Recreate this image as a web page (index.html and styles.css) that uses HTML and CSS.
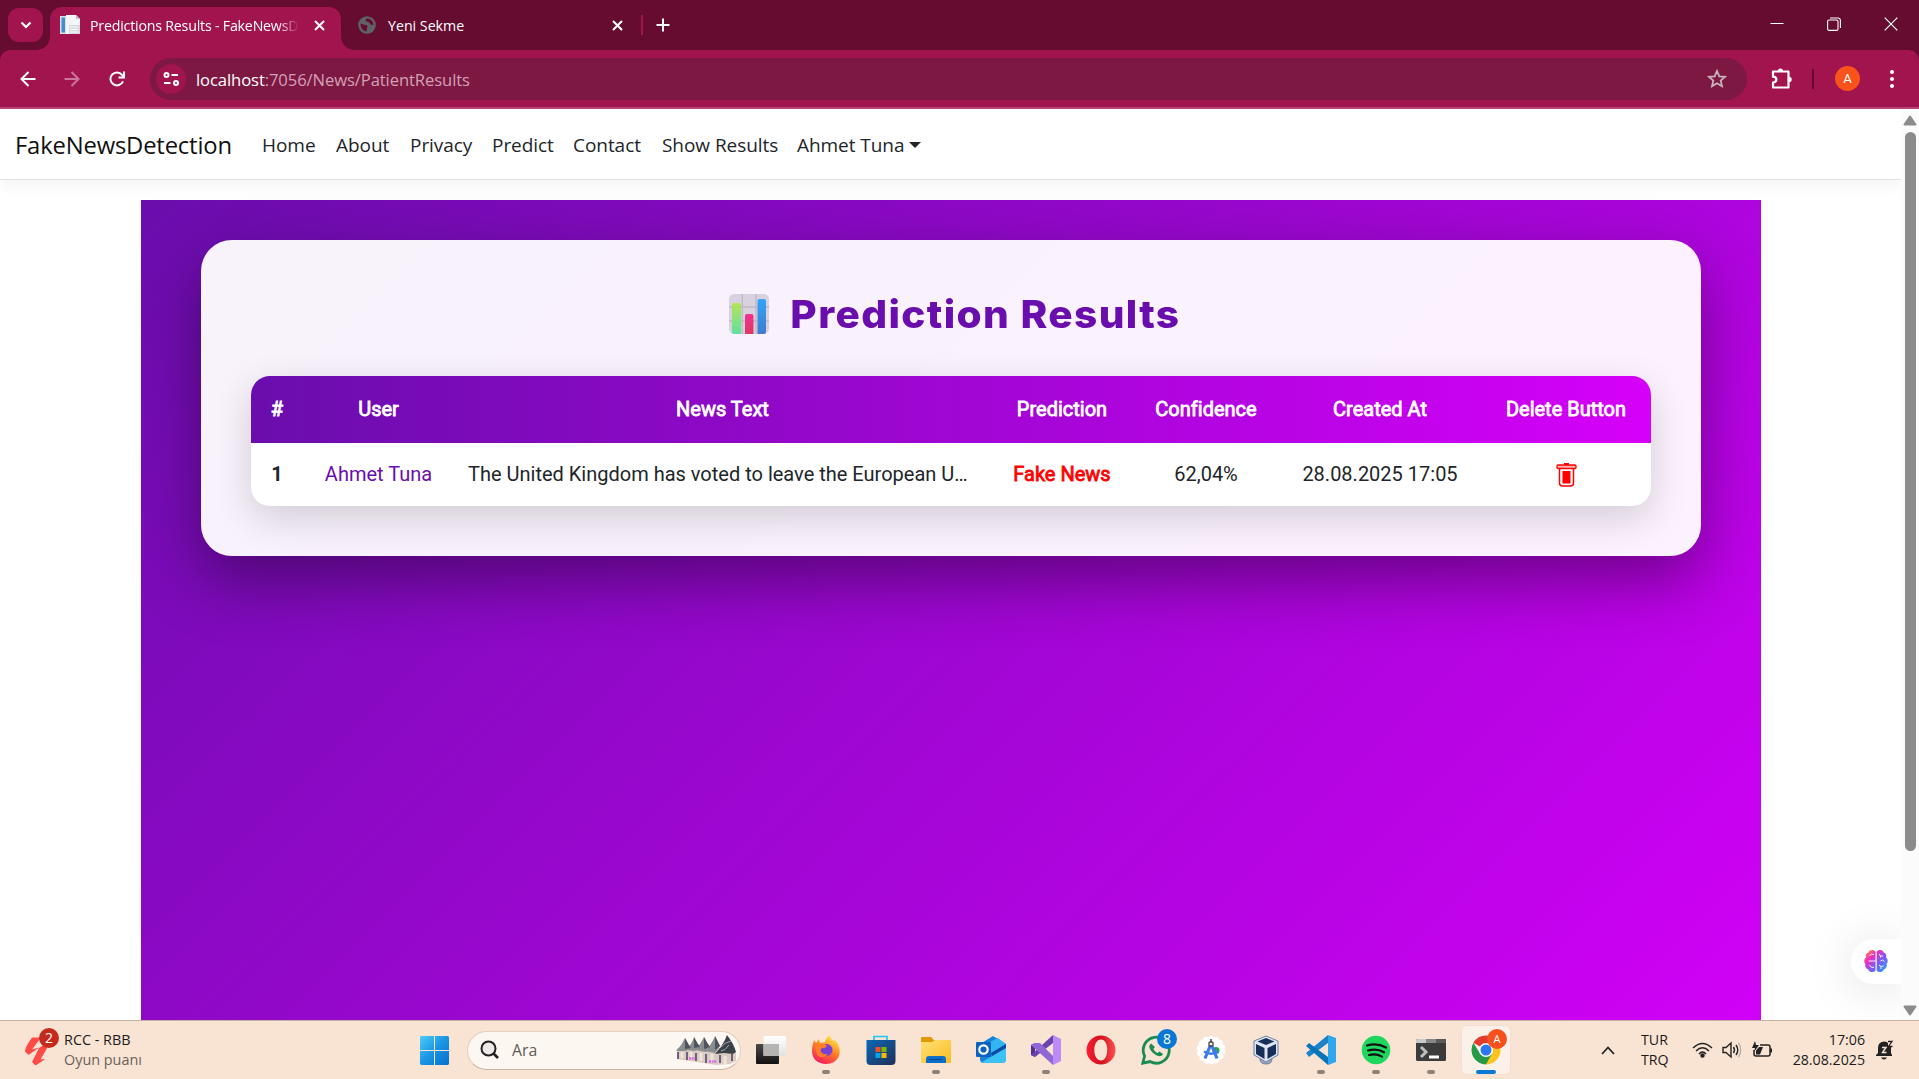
FILE: index.html
```html
<!DOCTYPE html>
<html lang="tr">
<head>
<meta charset="utf-8">
<title>Predictions Results - FakeNewsDetection</title>
<link rel="stylesheet" href="styles.css">
</head>
<body>
<div class="screen">
  <header class="tabstrip">
    <button class="tab-search" aria-label="Tabs"><svg width="12" height="8" viewBox="0 0 12 8"><path d="M1.5 1.5 6 6l4.500-4.500" fill="none" stroke="#fff" stroke-width="2.200"/></svg></button>
    <div class="tab tab-active">
      <svg class="favicon" width="21" height="20" viewBox="0 0 21 20"><rect x="0" y="1" width="13" height="18" fill="#d9dde2"/><rect x="1.500" y="2.500" width="3.500" height="15" fill="#3f8fd0"/><path d="M6 0h10l4 4v15H6z" fill="#f3f5f7"/><path d="M16 0l4 4h-4z" fill="#b9c2cb"/><rect x="9" y="10" width="11" height="9" fill="#d3dae0"/><path d="M10 12h8M10 14.500h8M10 17h8" stroke="#fff"/></svg>
      <span class="tab-title fade">Predictions Results - FakeNewsDetection</span>
      <svg class="tab-x" width="11" height="11" viewBox="0 0 11 11"><path d="M1 1l9 9M10 1l-9 9" stroke="#fff" stroke-width="2"/></svg>
    </div>
    <div class="tab tab-second">
      <svg class="globe" width="18" height="18" viewBox="0 0 18 18"><circle cx="9" cy="9" r="8.800" fill="#5f6368"/><path d="M2.500 7.500c2 .5 3.500 1.500 5.500 1.500 1.500.5 2 2 1 3l-.5 3.500C5 15 2.500 12 2.500 7.500zM9.500 2.500c-2 .5-2.500 2-1 3 1.500.5 3.500.5 3.500 2.500 1 1.500 2.500.5 3.500 1 0-3.500-2.500-6-6-6.500z" fill="#650c30"/></svg>
      <span class="tab-title">Yeni Sekme</span>
      <svg class="tab-x" width="11" height="11" viewBox="0 0 11 11"><path d="M1 1l9 9M10 1l-9 9" stroke="#fff" stroke-width="2"/></svg>
    </div>
    <span class="tab-sep"></span>
    <svg class="new-tab" width="14" height="14" viewBox="0 0 14 14"><path d="M7 .5v13M.5 7h13" stroke="#fff" stroke-width="2"/></svg>
    <div class="win-controls">
      <svg width="14" height="14" viewBox="0 0 14 14"><path d="M.5 6.500h13" stroke="#fff"/></svg>
      <svg width="14" height="14" viewBox="0 0 14 14" fill="none" stroke="#fff" stroke-width="1.100"><rect x=".6" y="3" width="10.400" height="10.400" rx="1.500"/><path d="M3 1h8a2.400 2.400 0 0 1 2.400 2.400V11"/></svg>
      <svg width="14" height="14" viewBox="0 0 14 14"><path d="M.7.7l12.600 12.600M13.300.7.7 13.300" stroke="#fff" stroke-width="1.200"/></svg>
    </div>
  </header>

  <div class="toolbar-wrap"><div class="toolbar">
    <svg class="t-back" width="16" height="16" viewBox="0 0 16 16" fill="none" stroke="#fff" stroke-width="2"><path d="M15.500 8H2M8.500 1 1.500 8l7 7"/></svg>
    <svg class="t-fwd" width="16" height="16" viewBox="0 0 16 16" fill="none" stroke="#c9779a" stroke-width="2"><path d="M.5 8H14M7.500 1l7 7-7 7"/></svg>
    <svg class="t-reload" width="16" height="16" viewBox="0 0 16 16" fill="none" stroke="#fff" stroke-width="2"><path d="M14 10.300A6.500 6.500 0 1 1 13 3.800L14.600 6"/><path d="M15 .5V6.500H9.500"/></svg>
    <div class="omnibox">
      <span class="site-info"><svg width="17" height="14" viewBox="0 0 17 14" fill="none" stroke="#fff" stroke-width="2"><circle cx="3.500" cy="3" r="2"/><path d="M8.500 3H15M1 11h6.500"/><circle cx="13" cy="11" r="2"/></svg></span>
      <span class="url"><b>localhost</b>:7056/News/PatientResults</span>
      <svg class="star" width="20" height="19" viewBox="0 0 20 19"><path d="M10 2l2.300 5.300 5.700.5-4.300 3.800 1.300 5.600-5-3-5 3 1.300-5.600L2 7.800l5.700-.5z" fill="none" stroke="#c8b4bd" stroke-width="1.800"/></svg>
    </div>
    <svg class="puzzle" width="21" height="21" viewBox="0 0 21 21"><path d="M2 3.500h15.500v16H2v-5c4.500-.3 4.500-5.500 0-5.800z" fill="none" stroke="#fff" stroke-width="2.200" stroke-linejoin="round"/><path d="M6.800 3a2.600 2.600 0 0 1 5.200 0zM18 8.800a2.700 2.700 0 0 1 0 5.400z" fill="#fff"/></svg>
    <span class="tool-sep"></span>
    <span class="avatar">A</span>
    <svg class="dots" width="4" height="20" viewBox="0 0 4 20" fill="#fff"><circle cx="2" cy="3" r="2"/><circle cx="2" cy="10" r="2"/><circle cx="2" cy="17" r="2"/></svg>
  </div></div>

  <div class="viewport">
    <div class="page">
      <nav class="navbar">
        <a class="brand">FakeNewsDetection</a>
        <a class="n1">Home</a><a class="n2">About</a><a class="n3">Privacy</a><a class="n4">Predict</a><a class="n5">Contact</a><a class="n6">Show Results</a><a class="n7">Ahmet Tuna<i class="caret"></i></a>
      </nav>
      <main class="results">
        <section class="card">
          <h1><svg width="40" height="40" viewBox="0 0 40 40"><defs><linearGradient id="g1" x1="0" y1="0" x2="0" y2="1"><stop offset="0" stop-color="#b4e556"/><stop offset="1" stop-color="#5fe0a0"/></linearGradient><linearGradient id="g2" x1="0" y1="0" x2="0" y2="1"><stop offset="0" stop-color="#f42f93"/><stop offset="1" stop-color="#dc3a61"/></linearGradient><linearGradient id="g3" x1="0" y1="0" x2="0" y2="1"><stop offset="0" stop-color="#31a5f8"/><stop offset="1" stop-color="#407bcc"/></linearGradient></defs><rect width="40" height="40" rx="5" fill="#d8d2e0"/><path d="M13.300 0v40M27 0v40M0 13h40M0 27h40" stroke="#bcb6c5" stroke-width="1.300"/><path d="M3 11q0-2 2-2h5q2 0 2 2v29H5q-2 0-2-2z" fill="url(#g1)"/><path d="M16 22q0-2 2-2h4.500q2 0 2 2v18H16z" fill="url(#g2)"/><path d="M28.500 7q0-2 2-2H35q2 0 2 2v31q0 2-2 2h-6.500z" fill="url(#g3)"/></svg><span>Prediction Results</span></h1>
          <table>
            <colgroup><col class="c1"><col class="c2"><col class="c3"><col class="c4"><col class="c5"><col class="c6"><col class="c7"></colgroup>
            <thead><tr><th>#</th><th>User</th><th>News Text</th><th>Prediction</th><th>Confidence</th><th>Created At</th><th>Delete Button</th></tr></thead>
            <tbody><tr><td class="num">1</td><td class="user">Ahmet Tuna</td><td class="news">The United Kingdom has voted to leave the European U…</td><td class="fake">Fake News</td><td>62,04%</td><td>28.08.2025 17:05</td><td><svg class="trash" width="21" height="24" viewBox="0 0 21 24"><rect x="8" y="0" width="5" height="2" fill="red"/><rect x="1" y="2" width="19" height="3.500" rx="1" fill="#ffb3b3" stroke="red" stroke-width="1.300"/><path d="M3.500 6v14q0 3 3 3h8q3 0 3-3V6" fill="none" stroke="red" stroke-width="1.500"/><rect x="6.500" y="8" width="8" height="12.500" fill="red"/></svg></td></tr></tbody>
          </table>
        </section>
      </main>
      <div class="brain"><svg width="24" height="24" viewBox="0 0 24 24"><defs><linearGradient id="br" x1="0" y1="0" x2="1" y2="1"><stop offset=".05" stop-color="#ff9a3c"/><stop offset=".3" stop-color="#f02fb8"/><stop offset=".6" stop-color="#7a5cf5"/><stop offset="1" stop-color="#1fa8ff"/></linearGradient></defs><path d="M11.500 2.500C10 .3 5 .3 4.500 3.500 2 4 1.300 6.500 2 8.500-.2 10-.2 13.500 1.500 15c-1 2.500.5 5 2.800 5.500C5.500 23.700 10 23.700 11.500 21.500zM12.700 2.500C14.200.3 19 .3 19.600 3.500c2.500.5 3.200 3 2.400 5C24.200 10 24.200 13.500 22.500 15c1 2.500-.5 5-2.800 5.500-1 3.200-5.500 3.200-7 1z" fill="url(#br)"/><path d="M11.500 12H4.500M5.500 6.500Q7 4.500 10 5.500M5.500 16q1 3 4.500 2.500M15 5l1.500 2L19 7M16.500 7v1.500M16.500 12l2-1 2 1.500M15 16l2 1.500 2.500-.5M17 17.500V20" fill="none" stroke="#fff" stroke-width=".9"/></svg></div>
    </div>
    <div class="scrollbar"><svg width="14" height="11" viewBox="0 0 14 11"><path d="M7 1.500 12.500 9.500h-11z" fill="#8b8b8b" stroke="#8b8b8b" stroke-width="2" stroke-linejoin="round"/></svg><span class="thumb"></span><svg class="down" width="14" height="11" viewBox="0 0 14 11"><path d="M7 9.500 1.500 1.500h11z" fill="#8b8b8b" stroke="#8b8b8b" stroke-width="2" stroke-linejoin="round"/></svg></div>
  </div>

  <footer class="taskbar">
    <div class="widget">
      <svg width="40" height="38" viewBox="0 0 40 38"><path d="M7 6.500h9L7 18.500l7-2L3.500 24 0 20.500q0-3 3-8zM14 17l8-5h3L15.500 28.500l5-.5-10 6.500L7 31z" fill="#ff4a45"/></svg><span class="badge red">2</span>
      <div class="widget-text"><span>RCC - RBB</span><small>Oyun puanı</small></div>
    </div>
    <svg class="start" width="29" height="29" viewBox="0 0 29 29"><defs><linearGradient id="w" x1="0" y1="0" x2="1" y2="1"><stop offset="0" stop-color="#4ccdf9"/><stop offset=".5" stop-color="#1a94e2"/><stop offset="1" stop-color="#0570cf"/></linearGradient></defs><path d="M1 0h13v14H0V1zM15 0h13l1 1v13H15zM0 15h14v14H1l-1-1zM15 15h14v13l-1 1H15z" fill="url(#w)"/></svg>
    <div class="search">
      <svg width="20" height="20" viewBox="0 0 20 20" fill="none" stroke="#222"><circle cx="8.500" cy="8.500" r="7" stroke-width="2" fill="#eee9e6"/><path d="M13.500 13.500 18 18" stroke-width="2.600"/></svg><span>Ara</span>
      <svg class="houses" width="62" height="32" viewBox="0 0 62 32"><path d="M2 14h57l2 5v8l-6 3-14 1L2 25z" fill="#dccbc3"/><path d="M1 17Q7 11 10 4q3 6 6 10l-5 3zM11 16Q17 10 19 3q3 6 6 10l-5 4zM20 16q6-6 9-13 3 6 6 10l-4 5zM30 17q7-7 10-15 3 6 5 10l-5 7z" fill="#8a8d90"/><path d="M10 4q3 6 6 10l-6 1zM19 3q3 6 6 10l-6 1zM29 3q3 6 6 10l-6 2zM40 2q3 6 5 10l-5 4z" fill="#4e545c"/><path d="M40 20Q49 10 52 1q7 9 9 17l-3 2-9-1z" fill="#3b4149"/><path d="M45 14q5-6 11-7M46 17q4 0 8-6" stroke="#a0a8b2" stroke-width="1" fill="none"/><path d="M3 18v7M12 18v8M21 19v8M31 20v9M45 21v8M57 20v7" stroke="#565270" stroke-width="1.700"/><path d="M7 18v6M16 18v8M26 19v8M37 20v9M50 22v8" stroke="#f1e2da" stroke-width="3"/><path d="M14 24.500h6M34 27.500h8" stroke="#d96bee" stroke-width="2.600" stroke-dasharray="2 .6"/></svg>
    </div>
    <div class="apps">
      <span><svg width="30" height="30" viewBox="0 0 30 30"><defs><linearGradient id="tv" x1="0" y1="0" x2="0" y2="1"><stop stop-color="#4a4a47"/><stop offset="1" stop-color="#111"/></linearGradient><linearGradient id="tw" x1="0" y1="0" x2="0" y2="1"><stop stop-color="#fff"/><stop offset="1" stop-color="#e2e2e2"/></linearGradient></defs><rect y="9" width="23" height="20" rx="1" fill="url(#tv)"/><rect x="7.500" y="1" width="22.500" height="20" rx="1" fill="url(#tw)"/><rect x="7.500" y="9" width="15.500" height="12" fill="#b4b4b3"/></svg></span>
      <span class="run"><svg width="30" height="30" viewBox="0 0 30 30"><defs><linearGradient id="ff" x1=".8" y1="0" x2=".3" y2="1"><stop offset=".1" stop-color="#ffe13f"/><stop offset=".5" stop-color="#ff8028"/><stop offset="1" stop-color="#f5195f"/></linearGradient></defs><path d="M3 5 5 8 8 4l1 4 5-1q1-5 5-7 0 4 4 6l1-1c4 4 6 11 4 16-2 5-7 8-13 8C7 29 1 24 1 16 1 11 2 8 3 5z" fill="url(#ff)"/><circle cx="15.500" cy="15" r="6" fill="#7841d4"/><path d="M4 10q6-3 11 0 2 2-2 3-5 0-3 4 2 3 7 2-5 6-11 1z" fill="#ff7d28"/></svg></span>
      <span><svg width="30" height="30" viewBox="0 0 30 30"><defs><linearGradient id="st" x1="0" y1="0" x2="1" y2="1"><stop stop-color="#0b68b6"/><stop offset="1" stop-color="#202f57"/></linearGradient></defs><path d="M8 6V1.500h13V6" fill="none" stroke="#22c5f4" stroke-width="1.700"/><path d="M.5 5h29v21q0 4-4 4h-21q-4 0-4-4z" fill="url(#st)"/><path d="M9.500 12h5v5h-5z" fill="#f25022"/><path d="M15.500 12h5v5h-5z" fill="#7fba00"/><path d="M9.500 18h5v5h-5z" fill="#00a4ef"/><path d="M15.500 18h5v5h-5z" fill="#ffb900"/></svg></span>
      <span class="run"><svg width="30" height="30" viewBox="0 0 30 30"><defs><linearGradient id="fo" x1="0" y1="0" x2="1" y2="1"><stop stop-color="#ffe07a"/><stop offset="1" stop-color="#fbbd1e"/></linearGradient></defs><path d="M0 3q0-1 1-1h9l3 3h17v8H0z" fill="#dd9a05"/><path d="M0 7h11l3-2h16v22q0 1-1 1H1q-1 0-1-1z" fill="url(#fo)"/><path d="M5 28v-4q0-3 3-3h14q3 0 3 3v4z" fill="#0e6fc9"/><path d="M8 24.500h13" stroke="#084b93" stroke-width="1.200"/></svg></span>
      <span><svg width="30" height="30" viewBox="0 0 30 30"><path d="M4 9 17 1l13 8v15q0 4-4 4H8q-4 0-4-4z" fill="#1683d8"/><path d="M8 10 22 3l8 6-14 9z" fill="#35b5f0"/><path d="M15 18 30 9v5L17 22z" fill="#0a4ba8"/><path d="M6 27 30 13v11q0 4-4 4H8z" fill="#3cc3f5"/><rect y="7" width="15" height="15" rx="1" fill="#0b63c1"/><circle cx="7.500" cy="14.500" r="4.200" fill="none" stroke="#fff" stroke-width="2.200"/></svg></span>
      <span class="run"><svg width="30" height="30" viewBox="0 0 30 30"><path d="M0 10 4 8v14l-4-2z" fill="#52308f"/><path d="M0 20 4 22 22 8V0z" fill="#6b42ae"/><path d="M4 8l5 0 13 13v9L0 10z" fill="#9167d6"/><path d="M22 0l8 4v22l-8 4z" fill="#bd8af8"/></svg></span>
      <span><svg width="30" height="30" viewBox="0 0 30 30"><defs><linearGradient id="op" x1="0" y1="0" x2="1" y2="0"><stop stop-color="#fa1e30"/><stop offset=".5" stop-color="#d0101e"/><stop offset="1" stop-color="#ff5050"/></linearGradient></defs><path fill-rule="evenodd" d="M15 .5A14.500 14.500 0 1 1 15 29.500 14.500 14.500 0 0 1 15 .5zM15 4.500C11 4.500 8.300 9 8.300 15S11 25.500 15 25.500 21.200 21 21.200 15 19 4.500 15 4.500z" fill="url(#op)"/></svg></span>
      <span><svg width="30" height="30" viewBox="0 0 30 30"><path d="M1.800 28.200 3.600 21A13 13 0 1 1 9 26.600z" fill="none" stroke="#1b8b53" stroke-width="2.800"/><path d="M10 8.500c-4 3 0 8 3.500 10.500 4 3 7 3 8.500 0l-3.500-2.500-2 1.500c-2-.8-3.500-2.500-4-4.500l1.500-1.500z" fill="#1b8b53"/></svg><b class="badge blue">8</b></span>
      <span><svg width="30" height="30" viewBox="0 0 30 30"><circle cx="15" cy="15" r="13.300" fill="#fff" stroke="#fff" stroke-width="2" stroke-dasharray="4 2"/><circle cx="20" cy="15.500" r="3.500" fill="#28a45b"/><path d="M14.500 10 9 23.500M15.500 10 21 23.500" stroke="#3e7be8" stroke-width="3.200"/><path d="M8 16.500q7 4.500 14 0" stroke="#3e7be8" stroke-width="2.300" fill="none"/><path d="M15 4v4" stroke="#444" stroke-width="1.500"/><rect x="13" y="7" width="4" height="4" rx="1" fill="#eee" stroke="#444" stroke-width="1.300"/></svg></span>
      <span><svg width="30" height="30" viewBox="0 0 30 30"><path d="M9 24q0 5 6 5t6-5z" fill="#9aa8c4" stroke="#5b6c8d" stroke-width=".8"/><path d="M15 1 27 6v14L15 27 3 20V6z" fill="#dde5f0" stroke="#6f80a0"/><path d="M15 3 23.500 6.500 15 10 6.500 6.500zM5 9l8.500 4v11L5 19zM25 9l-8.500 4v11L25 19z" fill="#172e58"/></svg></span>
      <span class="run"><svg width="30" height="30" viewBox="0 0 30 30"><path d="M0 18 22 0v8L3 22z" fill="#1c83ca"/><path d="M0 11 3 8 22 22v8z" fill="#0874ba"/><path d="M22 0l8 3v24l-8 3z" fill="#2fa7ed"/></svg></span>
      <span class="run"><svg width="30" height="30" viewBox="0 0 30 30"><circle cx="15" cy="15" r="14.300" fill="#1fd65f"/><path d="M6 10.500q10-3 19 2M7 15.500q9-2.500 16 1.700M8 20q7-2 13 1.600" fill="none" stroke="#111" stroke-width="2.200" stroke-linecap="round"/></svg></span>
      <span class="run"><svg width="30" height="30" viewBox="0 0 30 30"><rect y="4" width="30" height="22" rx="1.500" fill="#3b3b3b"/><path d="M1 4h9v4H0V5z" fill="#c9c9c9"/><path d="M10 4h10v4H10z" fill="#878787"/><path d="M20 4h10v4H20z" fill="#5a5a5a"/><path d="M5 12l5 5-5 5" fill="none" stroke="#bdbdbd" stroke-width="3"/><path d="M13 22h10" stroke="#fff" stroke-width="3"/></svg></span>
      <span class="current"><svg width="30" height="30" viewBox="0 0 30 30"><path d="M15 15 2.400 7.800A14.500 14.500 0 0 1 27.600 7.800z" fill="#e33b2e"/><path d="M15 15 27.600 7.800A14.500 14.500 0 0 1 15 29.500z" fill="#fcc31e"/><path d="M15 29.500A14.500 14.500 0 0 1 2.400 7.800L9 18.500l12 0z" fill="#249a48"/><circle cx="15" cy="15" r="7" fill="#fff"/><circle cx="15" cy="15" r="5.500" fill="#2b78ee"/></svg><b class="badge orange">A</b></span>
    </div>
    <div class="tray">
      <svg width="14" height="9" viewBox="0 0 14 9"><path d="M1 8l6-6.500L13 8" fill="none" stroke="#222" stroke-width="1.800"/></svg>
      <div class="lang"><span>TUR</span><span>TRQ</span></div>
      <svg class="wifi" width="21" height="16" viewBox="0 0 21 16" fill="none" stroke="#222" stroke-width="1.500"><path d="M1 6q9.500-9 19 0M4 9q6.500-6.500 13 0M7 12q3.500-4 7 0"/><circle cx="10.500" cy="13.500" r="1.500" fill="#222"/></svg>
      <svg class="sound" width="21" height="18" viewBox="0 0 21 18" fill="none" stroke="#222" stroke-width="1.400"><path d="M1 6.500h3L9 2v14l-5-4.500H1zM11.500 6q2 3 0 6M14 4q3.500 5 0 10"/><path d="M16.500 2q4.500 7 0 14" stroke="#bbb0a8"/></svg>
      <svg class="battery" width="21" height="18" viewBox="0 0 21 18"><path d="M8 4h8q2 0 2 2v7q0 2-2 2H4q-2 0-2-2V9" fill="none" stroke="#222" stroke-width="1.500"/><path d="M4 13.500V9.500L7 6h4L8 13.500zM18 7.500h2v4h-2zM3 0 0 7h3L2 11l5-7H4z" fill="#222"/></svg>
      <div class="clock"><span>17:06</span><span>28.08.2025</span></div>
      <svg class="bell" width="18" height="20" viewBox="0 0 18 20"><path d="M2 13V8q0-6.500 6.500-6.500Q11 1.500 12 3v2.500l3 1.500v6l1 2v1H0v-1zM5 17.500h6q-1 2-3 2t-3-2z" fill="#222"/><path d="M6 7.500h4l-3.500 5h4" stroke="#f8e4d3" fill="none" stroke-width="1.400"/><path d="M12 1.500h4l-3.500 5h4" stroke="#222" fill="none" stroke-width="1.300"/></svg>
    </div>
  </footer>
</div>
</body>
</html>
```
FILE: styles.css
```css
* { box-sizing: border-box; }
body { margin: 0; overflow: hidden; font-family: "Open Sans", "Noto Sans", sans-serif; }
svg { display: block; flex: none; }
.screen { width: 1919px; height: 1079px; display: flex; flex-direction: column; }

.tabstrip { height: 50px; flex: none; background: #650c30; display: flex; align-items: flex-start; padding: 0 21px 0 8px; }
.tab-search { margin: 8px 7px 0 0; width: 35px; height: 34px; border: 0; border-radius: 11px; background: #a1144e; display: flex; align-items: center; justify-content: center; padding: 0; }
.tab { display: flex; align-items: center; color: #fff; font-size: 14.200px; white-space: nowrap; }
.tab-active { position: relative; width: 291px; height: 43px; margin-top: 7px; background: #a1144e; border-radius: 12px 12px 0 0; padding: 0 16px 7px 10px; }
.tab-active::before, .tab-active::after { content: ""; position: absolute; bottom: 0; width: 13px; height: 13px; }
.tab-active::before { left: -13px; background: radial-gradient(circle at 0 0, transparent 12.500px, #a1144e 13px); }
.tab-active::after { right: -13px; background: radial-gradient(circle at 100% 0, transparent 12.500px, #a1144e 13px); }
.favicon { margin-right: 9px; }
.fade { width: 209px; overflow: hidden; letter-spacing: -.2px; -webkit-mask-image: linear-gradient(90deg, #000 90%, transparent); mask-image: linear-gradient(90deg, #000 90%, transparent); }
.tab-x { margin-left: auto; }
.tab-second { width: 283px; height: 36px; margin: 7px 0 0 17px; }
.globe { margin-right: 12px; }
.tab-second .tab-x { margin-right: 18px; }
.tab-sep { width: 2px; height: 20px; margin: 15px 13px 0 0; background: #a1144e; }
.new-tab { margin-top: 18px; }
.win-controls { margin: 17px 0 0 auto; display: flex; gap: 43px; }

.toolbar-wrap { background: #650c30; height: 59px; flex: none; }
.toolbar { height: 59px; background: #a1144e; border-bottom: 2px solid #ba4374; border-radius: 10px 10px 0 0; display: flex; align-items: center; padding: 0 25px 0 20px; }
.t-fwd { margin-left: 28px; }
.t-reload { margin-left: 29px; }
.omnibox { margin-left: 25px; width: 1597px; height: 42px; border-radius: 21px; background: #7d1843; display: flex; align-items: center; padding: 0 20px 0 6px; }
.site-info { width: 30px; height: 30px; border-radius: 50%; background: #a1144e; display: flex; align-items: center; justify-content: center; }
.url { margin: 1px 0 0 10px; font-size: 16.600px; letter-spacing: -.09px; color: #d3a1b6; }
.url b { font-weight: 400; color: #fff; }
.star { margin-left: auto; }
.puzzle { margin-left: 24px; }
.tool-sep { width: 2px; height: 20px; margin: 0 21px 0 20px; background: #650c30; }
.avatar { width: 25px; height: 25px; border-radius: 50%; background: #f8531b; color: #fff; font: 13px/25px Roboto, sans-serif; text-align: center; }
.dots { margin-left: auto; }

.viewport { height: 911px; flex: none; display: flex; background: #fff; overflow: hidden; }
.page { position: relative; width: 1901px; overflow: hidden; }
.navbar { height: 71px; margin-bottom: 20px; border-bottom: 1px solid #dee2e6; box-shadow: 0 5px 15px rgba(0,0,0,.05); display: flex; align-items: center; padding: 2px 15px 0; color: #212529; font-size: 19px; letter-spacing: -.05px; white-space: nowrap; }
.brand { width: 247px; font-size: 23.800px; letter-spacing: -.17px; color: #111; }
.n1 { width: 74px; } .n2 { width: 74px; } .n3 { width: 82px; } .n4 { width: 81px; } .n5 { width: 89px; } .n6 { width: 135px; }
.n7 { display: flex; align-items: center; gap: 5px; }
.caret { border: 6px solid transparent; border-top-color: #212529; border-bottom: 0; }
.results { width: 1620px; height: 911px; margin: 0 140px 0 141px; padding: 40px 60px; background: linear-gradient(135deg, #6a0dad, #d500f9); box-shadow: 0 0 20px rgba(0,0,0,.01); }
.card { height: 316px; border-radius: 31px; padding: 50px; background: rgba(255,255,255,.95); box-shadow: 0 25px 62px rgba(0,0,0,.4); }
h1 { margin: 0 0 39px -3px; height: 47px; display: flex; align-items: center; justify-content: center; gap: 31px; color: #6a0dad; font: 800 38.600px Inter, sans-serif; letter-spacing: 1.300px; white-space: nowrap; }
h1 span { transform: scaleX(1.052); }
table { width: 1400px; height: 130px; table-layout: fixed; border-collapse: separate; border-spacing: 0; border-radius: 19px; overflow: hidden; background: #fff; box-shadow: 0 12px 38px rgba(0,0,0,.16); font: 20px Roboto, sans-serif; color: #212529; text-align: center; white-space: nowrap; }
.c1 { width: 52px; } .c2 { width: 151px; } .c3 { width: 537px; } .c4 { width: 142px; } .c5 { width: 146px; } .c6 { width: 202px; } .c7 { width: 170px; }
th, td { padding: 0 0 2px; }
thead { background: linear-gradient(90deg, #6a0dad, #d500f9); color: #fff; }
th { height: 67px; font-weight: 400; -webkit-text-stroke: .8px #fff; }
.num { font-weight: 700; }
.user { color: #6a0dad; }
td.news { text-align: left; padding-left: 14px; }
.fake { color: red; -webkit-text-stroke: .8px red; }
.trash { margin: 2px auto 0; }
.brain { position: absolute; right: 0; top: 830px; width: 50px; height: 45px; border-radius: 23px 0 0 23px; background: #fff; box-shadow: 0 5px 50px rgba(0,0,0,.13); padding: 10px 13px; }
.scrollbar { width: 18px; background: #fbfbfb; display: flex; flex-direction: column; align-items: center; padding: 6px 0 4px; }
.thumb { width: 11px; height: 719px; border-radius: 6px; margin: 6px 0 auto; background: #8b8b8b; }

.taskbar { height: 59px; flex: none; border-top: 1px solid #c3b3a6; background: #f9e4d4; display: flex; align-items: center; color: #1b1b1b; }
.widget { position: relative; width: 420px; padding-left: 25px; display: flex; align-items: center; }
.widget-text { display: flex; flex-direction: column; margin-left: -1px; font-size: 14.400px; line-height: 20px; }
.widget-text small { font-size: 14.400px; color: #6a615a; }
.badge { position: absolute; width: 20px; height: 20px; border-radius: 50%; color: #fff; text-align: center; font: 14px/20px "Open Sans", sans-serif; }
.red { left: 39px; top: -2px; background: #c42b1c; }
.search { width: 274px; height: 39px; margin-left: 18px; border: 1px solid #e5cfbf; border-bottom-color: #cdb5a6; border-radius: 20px; background: #fdf7f1; display: flex; align-items: center; padding: 0 3px 0 12px; font-size: 15.800px; color: #5d5a58; }
.search span { margin-left: 12px; }
.houses { margin-left: auto; }
.apps { display: flex; gap: 7px; margin-left: 6px; }
.apps > span { position: relative; width: 48px; height: 48px; display: flex; align-items: center; justify-content: center; border-radius: 5px; }
.run::after, .current::after { content: ""; position: absolute; bottom: 0; left: 20px; width: 8px; height: 4px; border-radius: 2px; background: #8d8279; }
.current { background: #fcf1e9; box-shadow: 0 0 0 1px #f2dfd1; }
.current::after { left: 14px; width: 20px; background: #0a78d4; }
.blue, .orange { left: 25px; top: 3px; background: #0778d4; }
.orange { background: #f4511e; font-size: 11px; }
.tray { display: flex; align-items: center; margin-left: 91px; font-size: 14.200px; line-height: 20px; }
.lang { display: flex; flex-direction: column; margin-left: 26px; width: 51px; }
.sound { margin-left: 9px; } .battery { margin-left: 9px; }
.clock { display: flex; flex-direction: column; align-items: flex-end; width: 92px; }
.bell { margin-left: 11px; }
```
